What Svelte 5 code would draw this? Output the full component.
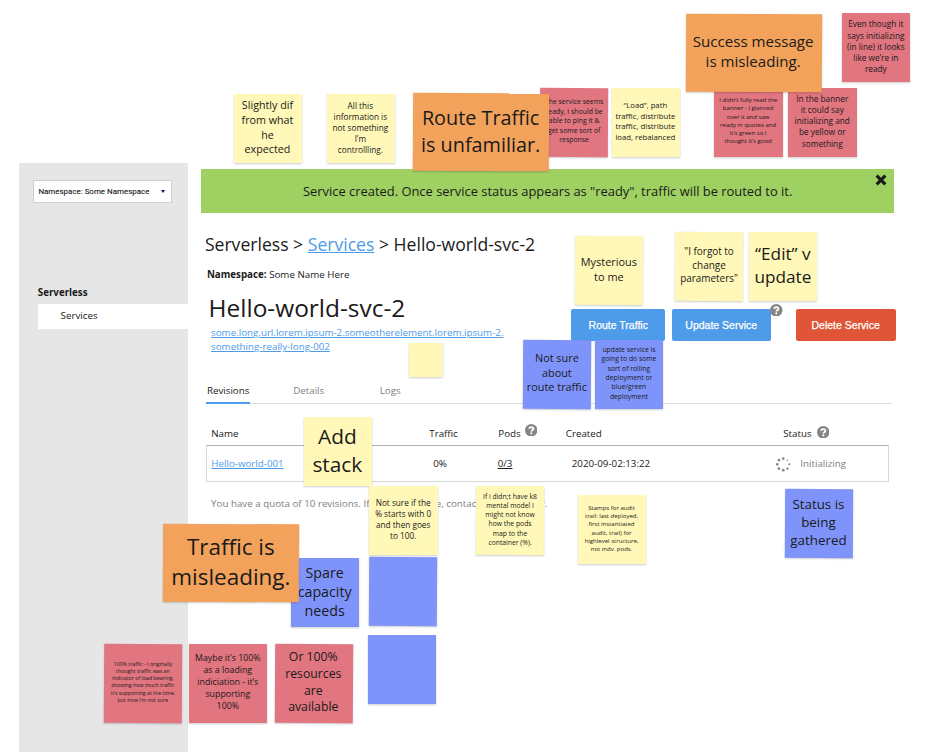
<script>
  // Sticky notes pinned on the canvas: position, size, line pitch and text.
  const S = 68.3, H = 69;
  const notes = [
    { c: 'yellow', x: 233.6, y: 94.3, p: 14.6, t: ['Slightly dif', 'from what', 'he', 'expected'], r: 0 },
    { c: 'yellow', x: 326.5, y: 94.3, p: 11.2, t: ['All this', 'information is', 'not something', 'I’m', 'controllling.'], r: 0 },
    { c: 'pink', x: 540.3, y: 87.5, p: 9.4, t: ['The service seems', 'ready, I should be', 'able to ping it &', 'get some sort of', 'response'], r: 0.3 },
    { c: 'yellow', x: 611.5, y: 88, p: 10.55, t: ['“Load”, path', 'traffic, distribute', 'traffic, distribute', 'load, rebalanced'], r: 0 },
    { c: 'orange', x: 413.1, y: 93.4, w: 135.7, h: 77.8, p: 27, t: ['Route Traffic', 'is unfamiliar.'], r: 0.3 },
    { c: 'pink', x: 714.3, y: 87.5, p: 8.25, t: ['I didn’t fully read the', 'banner - I glanced', 'over it and saw', 'ready in quotes and', 'it’s green so I', 'thought it’s good'], r: 0 },
    { c: 'pink', x: 788.4, y: 87.5, p: 11.25, t: ['In the banner', 'it could say', 'initializing and', 'be yellow or', 'something'], r: 0 },
    { c: 'orange', x: 685.5, y: 13.6, w: 135.9, h: 77.8, p: 20.6, t: ['Success message', 'is misleading.'], r: 0.3 },
    { c: 'pink', x: 842, y: 13.3, p: 11.25, t: ['Even though it', 'says initializing', '(in line) it looks', 'like we’re in', 'ready'], r: 0 },
    { c: 'yellow', x: 575, y: 236.4, p: 14.9, t: ['Mysterious', 'to me'], r: 0.35 },
    { c: 'yellow', x: 675.2, y: 232.3, p: 13.5, t: ['"I forgot to', 'change', 'parameters"'], r: 0.35 },
    { c: 'yellow', x: 749, y: 232.2, p: 23.4, t: ['“Edit” v', 'update'], r: 0 },
    { c: 'yellow', x: 409, y: 343, w: 34, h: 34.3, p: 10, t: [], r: 0 },
    { c: 'blue', x: 523, y: 339.6, p: 14.8, t: ['Not sure', 'about', 'route traffic'], r: 0.35 },
    { c: 'blue', x: 595.1, y: 339.7, p: 9.3, t: ['update service is', 'going to do some', 'sort of rolling', 'deployment or', 'blue/green', 'deployment'], r: 0 },
    { c: 'yellow', x: 303.5, y: 416.8, p: 28.4, t: ['Add', 'stack'], r: 0 },
    { c: 'yellow', x: 369.3, y: 485.8, p: 11.2, t: ['Not sure if the', '% starts with 0', 'and then goes', 'to 100.'], r: 0 },
    { c: 'yellow', x: 476.2, y: 486.1, p: 9.25, t: ['If i didn;t have k8', 'mental model I', 'might not know', 'how the pods', 'map to the', 'container (%).'], r: 0.35 },
    { c: 'yellow', x: 577.7, y: 495.4, p: 8.2, t: ['Stamps for audit', 'trail: last deployed,', 'first instantiated', 'audit, trail) for', 'highlevel structure,', 'not indv. pods.'], r: 0 },
    { c: 'blue', x: 784.6, y: 489, p: 18.2, t: ['Status is', 'being', 'gathered'], r: 0.3 },
    { c: 'blue', x: 290.8, y: 558.4, p: 19.4, t: ['Spare', 'capacity', 'needs'], r: 0 },
    { c: 'blue', x: 368.6, y: 557, p: 10, t: [], r: 0.35 },
    { c: 'blue', x: 368, y: 634.8, p: 10, t: [], r: 0 },
    { c: 'orange', x: 163.2, y: 524.4, w: 135.9, h: 78, p: 30.6, t: ['Traffic is', 'misleading.'], r: 0.3 },
    { c: 'pink', x: 104.2, y: 644.3, w: 78, h: 78.6, p: 7.2, t: ['100% traffic - I originally', 'thought traffic was an', 'indicator of load bearing,', 'showing how much traffic', 'it’s supporting at the time,', 'but now I’m not sure'], r: 0.35 },
    { c: 'pink', x: 189.1, y: 644.2, w: 78, h: 78.8, p: 12, t: ['Maybe it’s 100%', 'as a loading', 'indiciation - it’s', 'supporting', '100%'], r: 0 },
    { c: 'pink', x: 274.6, y: 644.3, w: 78, h: 78.8, p: 16.7, t: ['Or 100%', 'resources', 'are', 'available'], r: 0.35 },
  ];
  const dots = [[7.2, 1.6, 1.35], [3, 3.2, 1.35], [1.3, 7.3, 1.35], [2.9, 11.6, 1.35], [7.2, 13.2, 1.35], [11.5, 11.6, 1.2], [13.3, 7.3, 1], [11.5, 3.2, 0.7]];
</script>

{#snippet help()}
  <svg class="help" viewBox="0 0 512 512" width="12.5" height="12.5">
    <circle cx="256" cy="256" r="254" fill="#858585" />
    <path fill="none" stroke="#fff" stroke-width="74" d="M164 196c14-46 50-70 94-70 52 0 86 30 86 68 0 60-84 58-84 118" />
    <circle cx="258" cy="382" r="44" fill="#fff" />
  </svg>
{/snippet}

<div class="page">
  <aside>
    <div class="select"><span>Namespace: Some Namespace</span><i class="caret"></i></div>
    <nav>
      <b>Serverless</b>
      <div class="item">Services</div>
    </nav>
  </aside>

  <main>
    <div class="banner">
      <span>Service created. Once service status appears as "ready", traffic will be routed to it.</span>
      <svg class="close" viewBox="0 0 12 12" width="12" height="12"><path d="M1.7 1.7 10.3 10.3M10.3 1.7 1.7 10.3" stroke="#1a1a1a" stroke-width="3.1" /></svg>
    </div>
    <div class="crumbs">Serverless &gt; <a>Services</a> &gt; Hello-world-svc-2</div>
    <div class="ns"><b>Namespace:</b> Some Name Here</div>
    <section class="hero">
      <div class="title">
        <h1>Hello-world-svc-2</h1>
        <a>some.long.url.lorem.ipsum-2.someotherelement.lorem.ipsum-2.<br />something-really-long-002</a>
      </div>
      <div class="actions">
        <button class="route">Route Traffic</button>
        <button class="update">Update Service<span class="badge">{@render help()}</span></button>
        <button class="delete">Delete Service</button>
      </div>
    </section>
    <div class="tabs">
      <span class="active">Revisions</span><span class="details">Details</span><span>Logs</span>
    </div>
    <div class="table">
      <div class="row head">
        <span>Name</span><span>Traffic</span><span class="with-help pods">Pods {@render help()}</span><span>Created</span><span class="with-help">Status {@render help()}</span>
      </div>
      <div class="row body">
        <span><a>Hello-world-001</a></span>
        <span class="pct">0%</span>
        <span class="count"><u>0/3</u></span>
        <span class="date">2020-09-02:13:22</span>
        <span class="state">
          <svg viewBox="0 0 15 15" width="15" height="15">
            {#each dots as [x, y, r]}<circle cx={x} cy={y} {r} fill="#858585" />{/each}
          </svg>
          Initializing
        </span>
      </div>
    </div>
    <p class="quota">You have a quota of 10 revisions. If you need more, contact administrator.</p>
  </main>

  {#each notes as n}
    <div class="note {n.c}" style="left:{n.x}px;top:{n.y}px;width:{n.w ?? S}px;height:{n.h ?? H}px;font-size:{n.p / 1.362}px;line-height:{n.p}px;--tilt:{n.r}deg">
      <div class="text">{#each n.t as line}<div>{line}</div>{/each}</div>
    </div>
  {/each}
</div>

<style>
  :global(body) { background: #fff; }
  .page {
    position: relative;
    width: 928px;
    height: 752px;
    overflow: hidden;
    display: flex;
    font: 9.77px/14px 'Open Sans', 'Noto Sans', sans-serif;
    color: #1a1a1a;
    white-space: nowrap;
  }
  a { color: #4e9be9; text-decoration: underline; }
  aside {
    flex: none;
    box-sizing: border-box;
    width: 169px;
    margin: 163px 0 0 18.6px;
    padding: 17px 0 0 14.6px;
    background: #e6e6e6;
  }
  .select {
    box-sizing: border-box;
    width: 138.8px;
    height: 22.5px;
    padding: 1px 6.2px 0 4.2px;
    display: flex;
    align-items: center;
    justify-content: space-between;
    background: #fff;
    border: 1px solid #d0d0d0;
    font: 7.95px/12px Roboto, sans-serif;
    -webkit-text-stroke: 0.1px #1a1a1a;
  }
  .caret {
    border: 2.7px solid transparent;
    border-top: 3.4px solid #16164e;
    border-bottom: 0;
  }
  nav { margin: 83.5px 0 0 4.6px; }
  nav b { display: block; }
  .item {
    height: 25px;
    line-height: 24px;
    margin-top: 4px;
    padding-left: 22.8px;
    background: #fff;
  }
  main { flex: none; width: 695px; margin-left: 13.7px; padding-top: 169.3px; }
  .banner {
    position: relative;
    width: 692.7px;
    height: 43.7px;
    display: flex;
    align-items: center;
    justify-content: center;
    background: #9ed062;
    font-size: 12.92px;
  }
  .close { position: absolute; right: 6.7px; top: 5.2px; }
  .crumbs { margin: 18px 0 0 3.6px; font-size: 17.6px; line-height: 27px; }
  .ns { margin: 10.3px 0 0 5.6px; }
  .hero { display: flex; margin-top: 7.7px; height: 64px; }
  .title { width: 360.3px; padding-left: 9.8px; line-height: 14px; }
  h1 { margin: 0 0 0 -2.5px; height: 36.3px; font-size: 24.45px; font-weight: 400; line-height: 36px; }
  .actions { display: flex; margin-top: 19px; }
  button {
    position: relative;
    height: 32px;
    padding: 0;
    border: 0;
    border-radius: 2px;
    color: #fff;
    background: #4e9be9;
    font: 10.5px 'Liberation Sans', Arial, sans-serif;
    -webkit-text-stroke: 0.25px #fff;
  }
  .route { width: 93.7px; }
  .update { width: 99.3px; margin-left: 6.5px; }
  .delete { width: 100px; margin-left: 24.8px; background: #e05537; }
  .badge { position: absolute; right: -11.7px; top: -5px; line-height: 0; }
  .tabs {
    display: flex;
    box-sizing: border-box;
    width: 686px;
    height: 26px;
    margin: 24px 0 0 4.6px;
    border-bottom: 1px solid #dedede;
    line-height: 25px;
    color: #808080;
  }
  .active {
    box-sizing: border-box;
    width: 44px;
    height: 26px;
    padding-left: 1px;
    border-bottom: 2px solid #4e9be9;
    color: #1a1a1a;
  }
  .details { margin: 0 55px 0 43.3px; width: 31.5px; }
  .table { width: 683px; margin-left: 4.6px; }
  .row {
    box-sizing: border-box;
    display: grid;
    grid-template-columns: 218px 69px 67.5px 217.5px 1fr;
    align-items: center;
    padding-left: 5.4px;
  }
  .head { height: 41px; padding-top: 19px; }
  .body { height: 37px; border: 1px solid #d6d6d6; border-top-color: #b0b0b0; padding: 1.4px 0 0 4.4px; }
  .with-help { display: flex; gap: 5px; align-items: center; }
  .with-help .help { margin-top: -4px; }
  .pods .help { margin-top: -7.5px; margin-left: -0.9px; }
  .pct { padding-left: 4px; }
  .count { margin-left: -0.6px; }
  .date { padding-left: 6px; }
  .state { display: flex; align-items: center; gap: 9.5px; margin-left: -7.5px; color: #808080; }
  .quota { margin: 15px 0 0 9.8px; color: #808080; }
  .note {
    position: absolute;
    display: flex;
    align-items: center;
    justify-content: center;
    text-align: center;
  }
  .note::before {
    content: '';
    position: absolute;
    inset: 0;
    background: var(--paper);
    box-shadow: 0 1px 2px rgba(0, 0, 0, 0.2);
    transform: rotate(var(--tilt));
  }
  .text { position: relative; padding: 0 0.6px 2.4px 0; }
  .yellow { --paper: #fff8b8; }
  .orange { --paper: #f2a25b; }
  .pink { --paper: #e17580; }
  .blue { --paper: #7f94fa; }
</style>
